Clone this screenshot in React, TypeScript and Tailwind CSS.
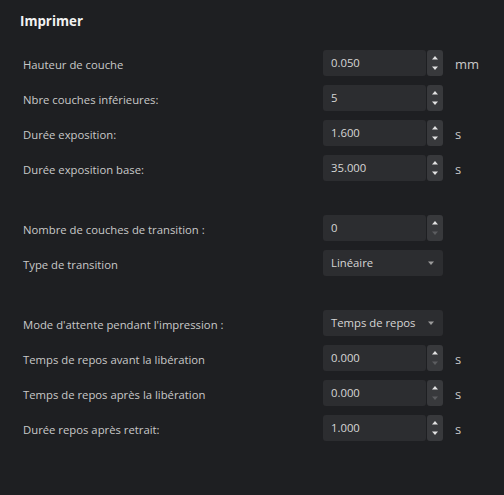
import React from 'react';

type Row =
  | { kind: 'spin'; label: string; value: string; unit?: string; atMin?: boolean }
  | { kind: 'select'; label: string; value: string };

const groups: Row[][] = [
  [
    { kind: 'spin', label: 'Hauteur de couche', value: '0.050', unit: 'mm' },
    { kind: 'spin', label: 'Nbre couches inférieures:', value: '5' },
    { kind: 'spin', label: 'Durée exposition:', value: '1.600', unit: 's' },
    { kind: 'spin', label: 'Durée exposition base:', value: '35.000', unit: 's' },
  ],
  [
    { kind: 'spin', label: 'Nombre de couches de transition :', value: '0', atMin: true },
    { kind: 'select', label: 'Type de transition', value: 'Linéaire' },
  ],
  [
    { kind: 'select', label: "Mode d'attente pendant l'impression :", value: 'Temps de repos' },
    { kind: 'spin', label: 'Temps de repos avant la libération', value: '0.000', unit: 's', atMin: true },
    { kind: 'spin', label: 'Temps de repos après la libération', value: '0.000', unit: 's', atMin: true },
    { kind: 'spin', label: 'Durée repos après retrait:', value: '1.000', unit: 's' },
  ],
];

function Triangle({ up, dim }: { up?: boolean; dim?: boolean }) {
  return (
    <svg width="8" height="5" viewBox="0 0 8 5" className="block">
      <path
        d={up ? 'M1 4.5 L4 1 L7 4.5 Z' : 'M1 0.5 L4 4 L7 0.5 Z'}
        fill={dim ? '#5c5d60' : '#e2e2e2'}
      />
    </svg>
  );
}

function SpinBox({ value, atMin }: { value: string; atMin?: boolean }) {
  return (
    <div className="flex h-[26px] gap-px">
      <div className="flex w-[103px] items-center rounded-[3px] bg-[#2c2d30] pl-[8px] text-[#d6d6d6]">
        {value}
      </div>
      <div className="flex w-[16px] flex-col items-center justify-between rounded-[3px] bg-[#38393c] py-[5px]">
        <Triangle up />
        <Triangle dim={atMin} />
      </div>
    </div>
  );
}

function Select({ value }: { value: string }) {
  return (
    <div className="flex h-[26px] w-[120px] items-center justify-between rounded-[3px] bg-[#2c2d30] pl-[8px] pr-[8px] text-[#d6d6d6]">
      <span>{value}</span>
      <svg width="8" height="5" viewBox="0 0 8 5">
        <path d="M1 0.5 L4 4 L7 0.5 Z" fill="#9b9b9b" />
      </svg>
    </div>
  );
}

export default function App() {
  return (
    <div
      className="min-h-[495px] w-[504px] bg-[#1e1f22] text-[11.3px] text-[#c9c9c9]"
      style={{ fontFamily: '"Open Sans", "Noto Sans", sans-serif' }}
    >
      <div className="pl-[20px] pt-[11px] text-[13.3px] font-bold leading-[20px] text-[#f2f2f2]">
        Imprimer
      </div>
      <div className="flex flex-col gap-[34px] pt-[19px]">
        {groups.map((group, gi) => (
          <div key={gi} className="flex flex-col gap-[9px]">
            {group.map((row) => (
              <div key={row.label} className="flex h-[26px] items-center">
                <div className="w-[323px] pl-[23px] pt-[4px]">{row.label}</div>
                {row.kind === 'spin' ? (
                  <SpinBox value={row.value} atMin={row.atMin} />
                ) : (
                  <Select value={row.value} />
                )}
                {row.kind === 'spin' && row.unit && (
                  <span className="ml-[12px] pt-[4px] text-[13px] text-[#c9c9c9]">{row.unit}</span>
                )}
              </div>
            ))}
          </div>
        ))}
      </div>
    </div>
  );
}
